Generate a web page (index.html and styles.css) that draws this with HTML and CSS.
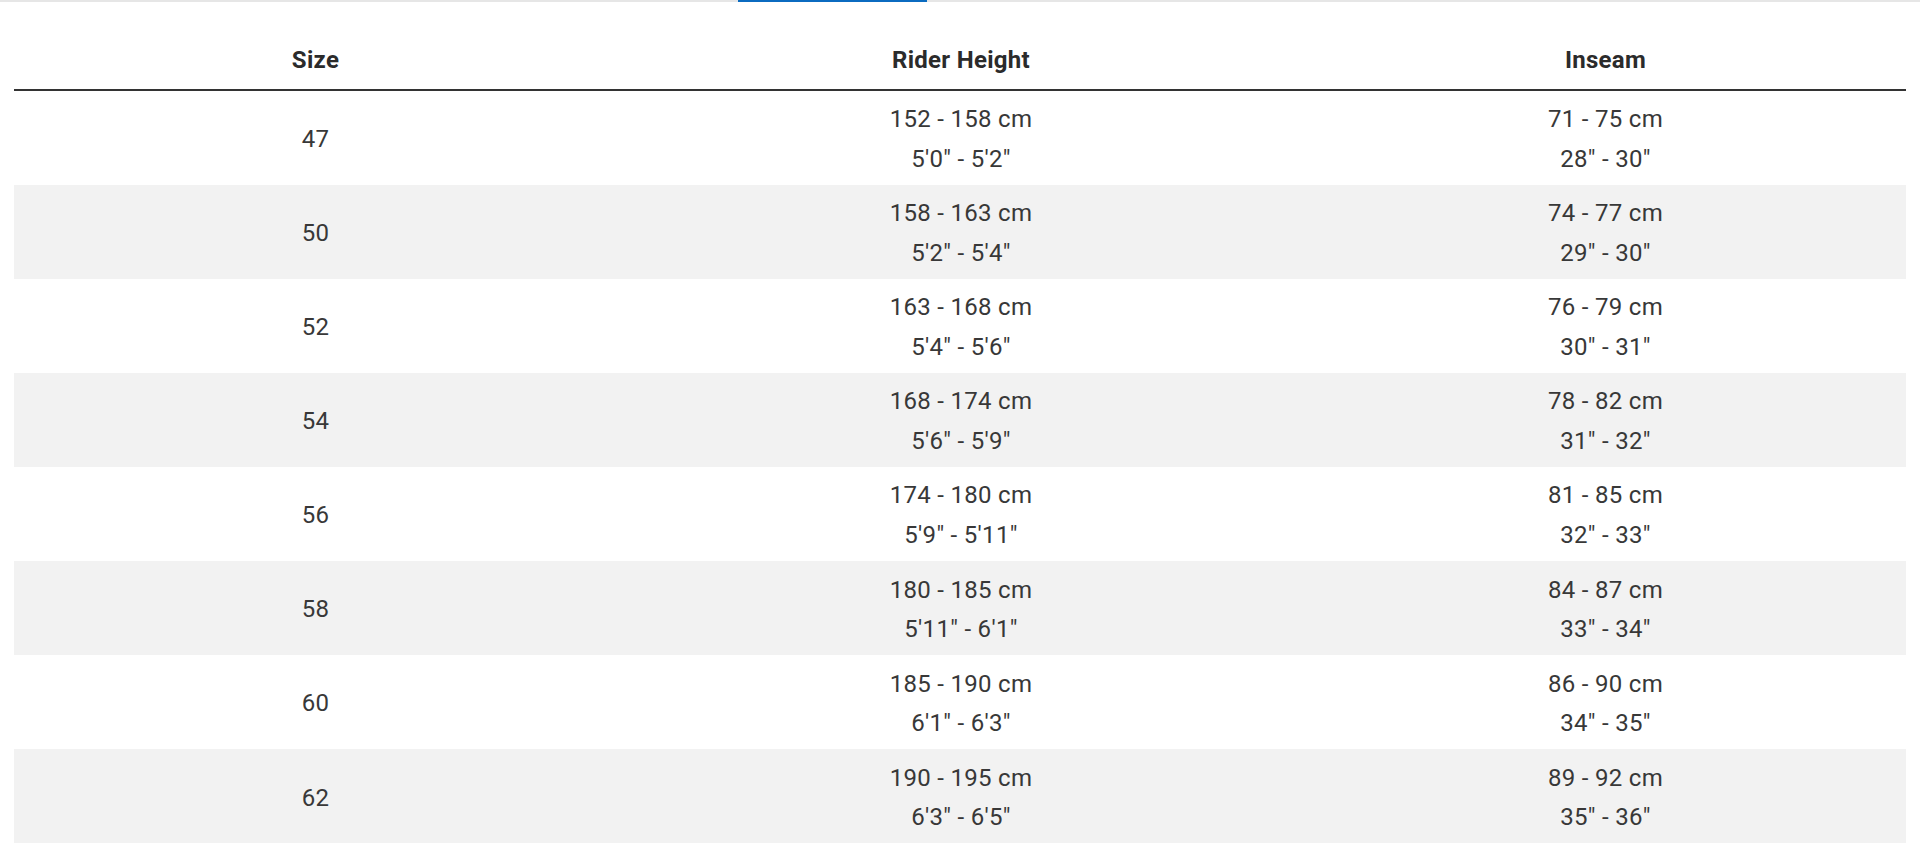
FILE: index.html
```html
<!DOCTYPE html>
<html lang="en">
<head>
<meta charset="utf-8">
<title>Size chart</title>
<link rel="stylesheet" href="styles.css">
</head>
<body>
<div class="tab-line">
  <div class="tab-gap-left"></div>
  <div class="tab-active"></div>
  <div class="tab-gap-right"></div>
</div>
<div class="table-wrap">
  <table class="size-table">
    <colgroup>
      <col class="col-size">
      <col class="col-height">
      <col class="col-inseam">
    </colgroup>
    <thead>
      <tr><th>Size</th><th>Rider Height</th><th>Inseam</th></tr>
    </thead>
    <tbody>
      <tr><td>47</td><td>152 - 158 cm<br>5'0" - 5'2"</td><td>71 - 75 cm<br>28" - 30"</td></tr>
      <tr><td>50</td><td>158 - 163 cm<br>5'2" - 5'4"</td><td>74 - 77 cm<br>29" - 30"</td></tr>
      <tr><td>52</td><td>163 - 168 cm<br>5'4" - 5'6"</td><td>76 - 79 cm<br>30" - 31"</td></tr>
      <tr><td>54</td><td>168 - 174 cm<br>5'6" - 5'9"</td><td>78 - 82 cm<br>31" - 32"</td></tr>
      <tr><td>56</td><td>174 - 180 cm<br>5'9" - 5'11"</td><td>81 - 85 cm<br>32" - 33"</td></tr>
      <tr><td>58</td><td>180 - 185 cm<br>5'11" - 6'1"</td><td>84 - 87 cm<br>33" - 34"</td></tr>
      <tr><td>60</td><td>185 - 190 cm<br>6'1" - 6'3"</td><td>86 - 90 cm<br>34" - 35"</td></tr>
      <tr><td>62</td><td>190 - 195 cm<br>6'3" - 6'5"</td><td>89 - 92 cm<br>35" - 36"</td></tr>
    </tbody>
  </table>
</div>
</body>
</html>
```
FILE: styles.css
```css
html, body {
  margin: 0;
  padding: 0;
  background: #ffffff;
}

body {
  font-family: Roboto, "Liberation Sans", Arial, sans-serif;
  color: #333333;
}

.tab-line {
  display: flex;
  height: 2px;
  background: #e6e6e6;
}

.tab-gap-left {
  width: 738px;
}

.tab-active {
  width: 189px;
  background: #0b6bc0;
}

.tab-gap-right {
  flex: 1;
}

.table-wrap {
  padding: 28px 14px 0;
}

.size-table {
  width: 100%;
  border-collapse: collapse;
  table-layout: fixed;
  font-size: 24px;
  line-height: 39.5px;
  letter-spacing: 0.3px;
}

.col-size { width: 603px; }
.col-height { width: 688px; }
.col-inseam { width: 601px; }

.size-table th {
  font-weight: 700;
  color: #2b2b2b;
  text-align: center;
  padding: 10.5px 0 8.5px;
  border-bottom: 2px solid #333333;
}

.size-table td {
  text-align: center;
  vertical-align: middle;
  padding: 9.6px 0 5.5px;
  color: #383838;
}

.size-table tbody tr:nth-child(even) {
  background: #f2f2f2;
}
```
